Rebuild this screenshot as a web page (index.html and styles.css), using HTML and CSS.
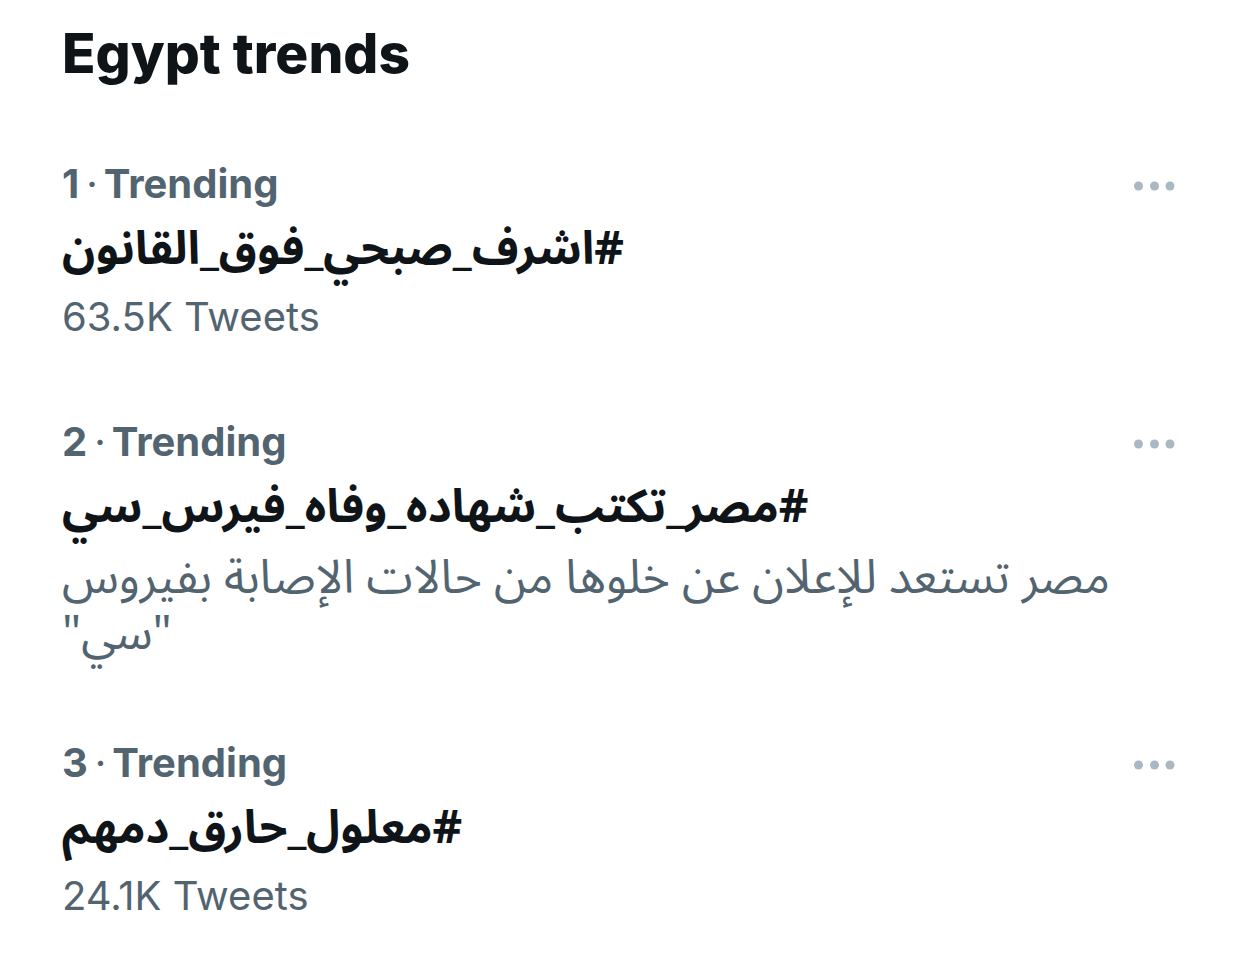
FILE: index.html
```html
<!DOCTYPE html>
<html lang="en">
<head>
<meta charset="utf-8">
<title>Egypt trends</title>
<link rel="stylesheet" href="styles.css">
</head>
<body>
<main class="panel">
  <h1 class="title">Egypt trends</h1>
  <ul class="trends">
    <li class="trend">
      <div class="trend-body">
        <div class="meta">1<span class="sep">·</span>Trending</div>
        <div class="tag" dir="rtl">#اشرف_صبحي_فوق_القانون</div>
        <div class="count">63.5K Tweets</div>
      </div>
      <button class="more" aria-label="More">
        <svg viewBox="0 0 41 10" width="41" height="10"><circle cx="4.5" cy="5" r="4.5"/><circle cx="20.5" cy="5" r="4.5"/><circle cx="36" cy="5" r="4.5"/></svg>
      </button>
    </li>
    <li class="trend">
      <div class="trend-body">
        <div class="meta">2<span class="sep">·</span>Trending</div>
        <div class="tag" dir="rtl">#مصر_تكتب_شهاده_وفاه_فيرس_سي</div>
        <div class="desc" dir="rtl">مصر تستعد للإعلان عن خلوها من حالات الإصابة بفيروس<br>"سي"</div>
      </div>
      <button class="more" aria-label="More">
        <svg viewBox="0 0 41 10" width="41" height="10"><circle cx="4.5" cy="5" r="4.5"/><circle cx="20.5" cy="5" r="4.5"/><circle cx="36" cy="5" r="4.5"/></svg>
      </button>
    </li>
    <li class="trend">
      <div class="trend-body">
        <div class="meta">3<span class="sep">·</span>Trending</div>
        <div class="tag" dir="rtl">#معلول_حارق_دمهم</div>
        <div class="count">24.1K Tweets</div>
      </div>
      <button class="more" aria-label="More">
        <svg viewBox="0 0 41 10" width="41" height="10"><circle cx="4.5" cy="5" r="4.5"/><circle cx="20.5" cy="5" r="4.5"/><circle cx="36" cy="5" r="4.5"/></svg>
      </button>
    </li>
  </ul>
</main>
</body>
</html>
```

FILE: styles.css
```css
html, body {
  margin: 0;
  padding: 0;
  background: #ffffff;
}

body {
  font-family: Inter, "Noto Sans", "DejaVu Sans", sans-serif;
  color: #0f1419;
}

.panel {
  padding: 25.5px 67px 0 62px;
}

.title {
  margin: 0 0 40.4px;
  font-size: 55px;
  line-height: 55px;
  font-weight: 800;
  color: #0f1419;
}

.trends {
  list-style: none;
  margin: 0;
  padding: 0;
}

.trend {
  display: flex;
  align-items: flex-start;
  gap: 20px;
  padding: 37.5px 0;
}

.trend-body {
  flex: 1;
  min-width: 0;
}

.meta {
  padding-top: 2px;
  margin-bottom: -2px;
  font-size: 40px;
  line-height: 48px;
  font-weight: 700;
  color: #536471;
}

.sep {
  display: inline-block;
  margin: 0 6px 0 7px;
  font-weight: 400;
}

.tag {
  text-align: left;
  font-family: "Noto Sans Arabic", "Noto Naskh Arabic", "DejaVu Sans", sans-serif;
  font-size: 46px;
  line-height: 87px;
  font-weight: 700;
  color: #0f1419;
}

.count {
  font-size: 40px;
  line-height: 48px;
  font-weight: 400;
  color: #536471;
}

.desc {
  text-align: left;
  white-space: nowrap;
  font-family: "Noto Sans Arabic", "Noto Naskh Arabic", "DejaVu Sans", sans-serif;
  font-size: 47px;
  line-height: 55.5px;
  color: #536471;
}

.more {
  flex: none;
  margin: 22.6px 0 0;
  padding: 0;
  border: 0;
  background: none;
  line-height: 0;
}

.more svg {
  display: block;
  fill: #aab8c2;
}
```
